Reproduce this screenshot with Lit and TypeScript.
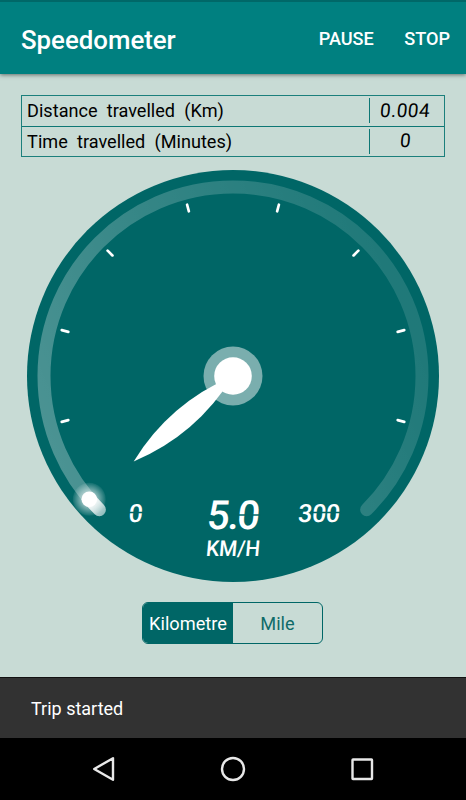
import { LitElement, html, css, svg } from "lit";
import { customElement, property } from "lit/decorators.js";

const CX = 206;
const CY = 206;

function polar(r: number, deg: number): [number, number] {
  const a = (deg * Math.PI) / 180;
  return [CX + r * Math.cos(a), CY + r * Math.sin(a)];
}

function arc(r: number, from: number, to: number): string {
  const [x1, y1] = polar(r, from);
  const [x2, y2] = polar(r, to);
  return `M${x1} ${y1}A${r} ${r} 0 ${to - from > 180 ? 1 : 0} 1 ${x2} ${y2}`;
}

@customElement("speed-dial")
class SpeedDial extends LitElement {
  @property({ type: Number }) speed = 5;
  @property({ type: Number }) max = 300;

  static styles = css`
    :host { display: block; width: 412px; height: 412px; }
    svg { display: block; overflow: visible; }
    .face { fill: #006666; }
    .track { fill: none; stroke: url(#sweep); stroke-width: 13; stroke-linecap: round; }
    .done { fill: none; stroke: url(#trail); stroke-width: 13; stroke-linecap: round; }
    .tick { stroke: #fff; stroke-width: 2.7; stroke-linecap: round; }
    .ring { fill: #7aaeae; }
    .white { fill: #fff; }
    .lcd { fill: #fff; font-family: Roboto, sans-serif; font-weight: 500; text-anchor: middle; }
    .big { font-size: 40px; }
    .mid { font-size: 25px; }
    .unit { font-size: 22px; }
    .gap { stroke: #006666; stroke-width: 1.3; }
  `;

  render() {
    const angle = 135 + (this.speed / this.max) * 270;
    const [dx, dy] = polar(189.3, angle - 0.1);
    const ticks = [165, 195, 225, 255, 285, 315, 345, 375];
    return html`<svg width="412" height="412" viewBox="0 0 412 412">
      <defs>
        <linearGradient id="sweep" x1="0" y1="0.85" x2="1" y2="0.5">
          <stop offset="0" stop-color="#fff" stop-opacity="0.3"></stop>
          <stop offset="0.5" stop-color="#fff" stop-opacity="0.205"></stop>
          <stop offset="1" stop-color="#fff" stop-opacity="0.125"></stop>
        </linearGradient>
        <linearGradient id="trail" gradientUnits="userSpaceOnUse" x1="62" y1="329" x2="78" y2="345">
          <stop offset="0" stop-color="#fff" stop-opacity="1"></stop>
          <stop offset="1" stop-color="#fff" stop-opacity="0.35"></stop>
        </linearGradient>
        <radialGradient id="glow">
          <stop offset="0.4" stop-color="#fff" stop-opacity="0.6"></stop>
          <stop offset="1" stop-color="#fff" stop-opacity="0.06"></stop>
        </radialGradient>
      </defs>
      <circle class="face" cx=${CX} cy=${CY} r="206"></circle>
      <path class="track" d=${arc(189, 135, 405)}></path>
      <path class="done" d=${arc(189, 135, angle)}></path>
      <circle cx=${dx} cy=${dy} r="16.5" fill="url(#glow)"></circle>
      <circle class="white" cx=${dx} cy=${dy} r="7.8"></circle>
      ${ticks.map((t) => {
        const [x1, y1] = polar(170.5, t);
        const [x2, y2] = polar(177.3, t);
        return svg`<line class="tick" x1=${x1} y1=${y1} x2=${x2} y2=${y2}></line>`;
      })}
      <circle class="ring" cx=${CX} cy=${CY} r="29.5"></circle>
      <path class="white" d="M0 0Q66 21 131 0Q66 -21 0 0Z" transform="translate(206 206) rotate(${angle - 0.2})"></path>
      <circle class="white" cx=${CX} cy=${CY} r="18.8"></circle>
      <g transform="translate(108 351.5) skewX(-5)">
        <text class="lcd mid">0</text>
        <line class="gap" x1="-8" y1="-9" x2="8" y2="-9"></line>
      </g>
      <g transform="translate(291.5 351.5) skewX(-5)">
        <text class="lcd mid" textLength="42">${this.max}</text>
        <line class="gap" x1="-7" y1="-9" x2="22" y2="-9"></line>
      </g>
      <g transform="translate(205.5 359) skewX(-5)">
        <text class="lcd big" textLength="53">${this.speed.toFixed(1)}</text>
        <line class="gap" x1="3" y1="-14" x2="28" y2="-14"></line>
      </g>
      <g transform="translate(205.5 385.8) skewX(-5)">
        <text class="lcd unit" textLength="54" lengthAdjust="spacingAndGlyphs">KM/H</text>
      </g>
    </svg>`;
  }
}

@customElement("app-root")
class AppRoot extends LitElement {
  static styles = css`
    :host {
      display: flex; flex-direction: column; width: 466px; height: 800px; overflow: hidden;
      background: #c8dbd5; font-family: Roboto, sans-serif; color: #000; box-sizing: border-box;
    }
    * { box-sizing: border-box; }
    header {
      flex: none; height: 74px; background: #008080; border-top: 2px solid #006868;
      display: flex; align-items: center; padding: 4px 16px 0 21px; color: #fff;
      box-shadow: 0 1px 4px rgba(0, 0, 0, 0.5); font-weight: 500;
    }
    h1 { margin: 0; flex: 1; font-size: 25.8px; font-weight: 500; line-height: 30px; }
    .action { font-size: 18.1px; line-height: 22px; margin: -2px 0 0 30.5px; }
    main { flex: 1; display: flex; flex-direction: column; align-items: center; padding-top: 21px; }
    .stats { width: 424px; margin-right: 1px; height: 62px; border: 1px solid #1b7f7c; display: flex; flex-direction: column; }
    .row { flex: 1; display: flex; align-items: center; font-size: 18.1px; word-spacing: 4.8px; padding-left: 5.6px; }
    .row + .row { border-top: 1px solid #0d7775; }
    .name { flex: 1; }
    .value {
      width: 75px; height: 25px; border-left: 1px solid #0d7775; display: flex;
      align-items: center; justify-content: center; padding-right: 2px;
    }
    .num { font-size: 19px; line-height: 22px; letter-spacing: 0.5px; transform: skewX(-5deg); }
    speed-dial { margin-top: 13px; }
    .toggle {
      margin: 20px 1px 0 0; width: 181px; height: 42px; border: 1px solid #006666; border-radius: 6px;
      display: flex; overflow: hidden; font-size: 18.2px; line-height: 42px; text-align: center; color: #0f6b69;
    }
    .toggle .on { width: 90px; background: #006666; color: #fff; }
    .toggle .off { flex: 1; }
    .snack {
      flex: none; height: 61px; background: #323232; border-top: 1px solid #111; color: #fff;
      font-size: 18px; display: flex; align-items: center; padding-left: 31px;
    }
    nav { flex: none; height: 62px; background: #000; display: flex; justify-content: center; align-items: center; gap: 97px; }
    nav svg { width: 32px; height: 32px; fill: none; stroke: #e8e8e8; stroke-width: 2.4; stroke-linejoin: round; }
  `;

  render() {
    return html`
      <header><h1>Speedometer</h1><span class="action">PAUSE</span><span class="action">STOP</span></header>
      <main>
        <div class="stats">
          <div class="row"><span class="name">Distance travelled (Km)</span><span class="value"><span class="num">0.004</span></span></div>
          <div class="row"><span class="name">Time travelled (Minutes)</span><span class="value"><span class="num">0</span></span></div>
        </div>
        <speed-dial></speed-dial>
        <div class="toggle"><span class="on">Kilometre</span><span class="off">Mile</span></div>
      </main>
      <div class="snack">Trip started</div>
      <nav>
        <svg viewBox="0 0 32 32"><path d="M25 5.2V26.8L6.2 16Z"></path></svg>
        <svg viewBox="0 0 32 32"><circle cx="16" cy="16" r="11"></circle></svg>
        <svg viewBox="0 0 32 32"><rect x="6.5" y="6.5" width="19.5" height="19.5" rx="0.5"></rect></svg>
      </nav>`;
  }
}
